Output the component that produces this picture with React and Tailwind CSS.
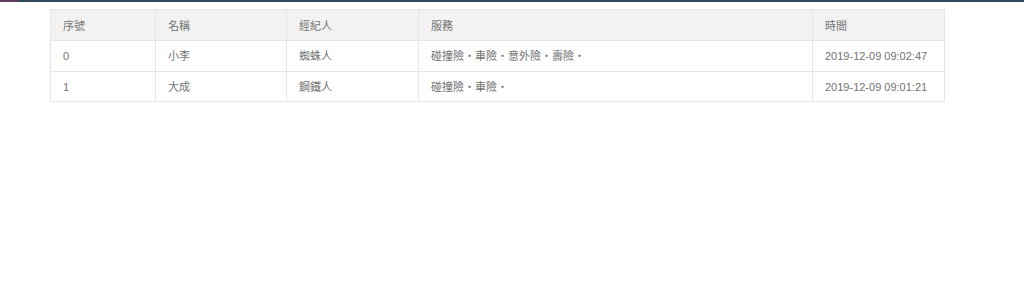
import React from 'react';

const columns = [
  { key: 'id', label: '序號', width: 'w-[105px]' },
  { key: 'name', label: '名稱', width: 'w-[131px]' },
  { key: 'agent', label: '經紀人', width: 'w-[132px]' },
  { key: 'service', label: '服務', width: 'w-[394px]' },
  { key: 'time', label: '時間', width: 'w-[132px]' },
];

const rows = [
  { id: '0', name: '小李', agent: '蜘蛛人', service: '碰撞險・車險・意外險・壽險・', time: '2019-12-09 09:02:47' },
  { id: '1', name: '大成', agent: '鋼鐵人', service: '碰撞險・車險・', time: '2019-12-09 09:01:21' },
];

const App = () => {
  return (
    <div className="min-h-[305px] w-full bg-white font-['Liberation_Sans','Noto_Sans_CJK_TC',sans-serif] text-[11px] text-[#727272]">
      {/* top strip */}
      <div className="flex h-[2px] w-full">
        <div className="w-[18px] bg-[#5f3f5c]" />
        <div className="flex-1 bg-[#2e4a5a]" />
      </div>

      <div className="pl-[50px] pt-[7px]">
        <table className="w-[895px] table-fixed border-collapse border border-[#e6e6e6]">
          <thead className="bg-[#f2f2f2]">
            <tr>
              {columns.map((col) => (
                <th
                  key={col.key}
                  className={`${col.width} h-[31px] border border-[#e6e6e6] px-[12px] pt-[2px] text-left font-normal`}
                >
                  {col.label}
                </th>
              ))}
            </tr>
          </thead>
          <tbody>
            {rows.map((row) => (
              <tr key={row.id}>
                {columns.map((col) => (
                  <td
                    key={col.key}
                    className="h-[30.5px] whitespace-nowrap border border-[#e6e6e6] px-[12px] pt-[1px]"
                  >
                    {row[col.key]}
                  </td>
                ))}
              </tr>
            ))}
          </tbody>
        </table>
      </div>
    </div>
  );
};

export default App;
